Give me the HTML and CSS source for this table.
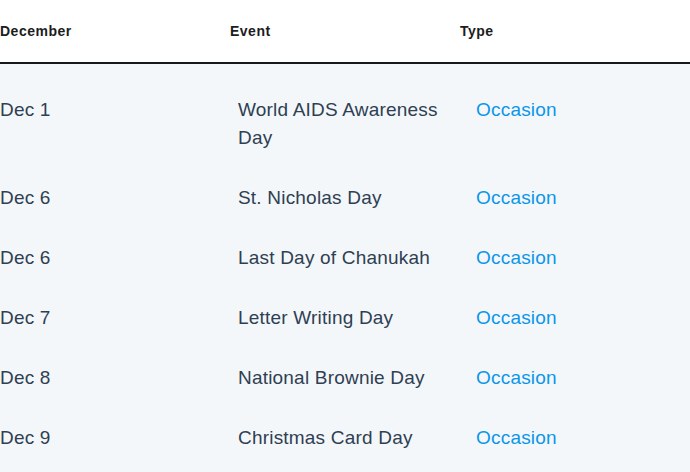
FILE: index.html
```html
<!DOCTYPE html>
<html>
<head>
<meta charset="utf-8">
<link rel="stylesheet" href="styles.css">
</head>
<body>
<div class="table">
  <div class="head">
    <div class="th">December</div>
    <div class="th">Event</div>
    <div class="th">Type</div>
  </div>
  <div class="body">
    <div class="row"><div class="date">Dec 1</div><div class="event">World AIDS Awareness Day</div><div class="type">Occasion</div></div>
    <div class="row"><div class="date">Dec 6</div><div class="event">St. Nicholas Day</div><div class="type">Occasion</div></div>
    <div class="row"><div class="date">Dec 6</div><div class="event">Last Day of Chanukah</div><div class="type">Occasion</div></div>
    <div class="row"><div class="date">Dec 7</div><div class="event">Letter Writing Day</div><div class="type">Occasion</div></div>
    <div class="row"><div class="date">Dec 8</div><div class="event">National Brownie Day</div><div class="type">Occasion</div></div>
    <div class="row"><div class="date">Dec 9</div><div class="event">Christmas Card Day</div><div class="type">Occasion</div></div>
  </div>
</div>
</body>
</html>
```
FILE: styles.css
```css
html, body {
  margin: 0;
  padding: 0;
  background: #f4f7fa;
  font-family: "Liberation Sans", Arial, sans-serif;
}
.table {
  width: 690px;
}
.head {
  display: grid;
  grid-template-columns: 230px 230px 230px;
  background: #ffffff;
  height: 62px;
  border-bottom: 2px solid #16191c;
  box-sizing: content-box;
  align-items: center;
}
.th {
  font-size: 14px;
  font-weight: bold;
  letter-spacing: 0.5px;
  color: #1b1d20;
  line-height: 16px;
}
.body {
  padding-top: 16px;
  background: #f4f7fa;
}
.row {
  display: grid;
  grid-template-columns: 238px 238px 1fr;
  padding: 16px 0;
  font-size: 19px;
  letter-spacing: 0.2px;
  line-height: 28px;
  color: #2e4052;
}
.event {
  width: 225px;
}
.type {
  color: #0b96ea;
}
```
